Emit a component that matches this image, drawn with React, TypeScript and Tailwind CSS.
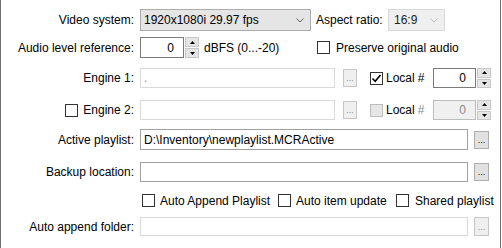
import React from "react";

const font = { fontFamily: '"Liberation Sans", Arial, sans-serif' };

function Chevron({ color }: { color: string }) {
  return (
    <svg width="8" height="5" viewBox="0 0 8 5">
      <path d="M0.5 0.5 L4 4 L7.5 0.5" fill="none" stroke={color} strokeWidth="1" />
    </svg>
  );
}

function Box({ checked = false, disabled = false }: { checked?: boolean; disabled?: boolean }) {
  return (
    <div
      className={
        "w-[13px] h-[13px] shrink-0 border flex items-center justify-center " +
        (disabled ? "border-[#bcbcbc] bg-[#e6e6e6]" : "border-[#333333] bg-white")
      }
    >
      {checked && (
        <svg width="11" height="11" viewBox="0 0 11 11">
          <path d="M1.5 5.5 L4.2 8.3 L9.5 2" fill="none" stroke="#000" strokeWidth="1.6" />
        </svg>
      )}
    </div>
  );
}

function Spin({ disabled = false, w }: { disabled?: boolean; w: string }) {
  return (
    <div className={"flex h-full " + w}>
      <div
        className={
          "flex-1 border flex items-center justify-end pr-[9px] text-[12px] " +
          (disabled ? "border-[#bcbcbc] bg-[#f0f0f0] text-[#8a8a8a]" : "border-[#7a7a7a] bg-white text-black")
        }
      >
        0
      </div>
      <div className="w-[14px] flex flex-col gap-[1px] ml-[1px]">
        <div className="flex-1 bg-[#e5e5e5] border border-[#c8c8c8] flex items-center justify-center">
          <svg width="5" height="3" viewBox="0 0 5 3">
            <path d="M0 3 L2.5 0 L5 3 Z" fill="#000" />
          </svg>
        </div>
        <div className="flex-1 bg-[#e5e5e5] border border-[#c8c8c8] flex items-center justify-center">
          <svg width="5" height="3" viewBox="0 0 5 3">
            <path d="M0 0 L2.5 3 L5 0 Z" fill="#000" />
          </svg>
        </div>
      </div>
    </div>
  );
}

function Btn({ disabled = false, w = "w-[15px]" }: { disabled?: boolean; w?: string }) {
  return (
    <div
      className={
        "h-full border flex items-end justify-center pb-[3px] text-[9px] leading-none " +
        w +
        (disabled ? " border-[#c6c6c6] bg-[#efefef] text-[#8a8a8a]" : " border-[#adadad] bg-[#e1e1e1] text-black")
      }
    >
      ...
    </div>
  );
}

function Label({ children }: { children: React.ReactNode }) {
  return (
    <div className="w-[133px] shrink-0 flex items-center justify-end gap-[5px] text-[12px] text-black whitespace-nowrap">
      {children}
    </div>
  );
}

export default function App() {
  return (
    <div className="w-[502px] h-[248px] bg-white overflow-hidden" style={font}>
      <div className="w-[501px] h-[248px] border-x border-[#6e6e6e] flex flex-col pt-[9px] text-[12px] text-black">
        {/* Row 1 */}
        <div className="flex items-center h-[22px]">
          <Label>Video system:</Label>
          <div className="ml-[6px] w-[171px] h-full bg-[#e5e5e5] border border-[#acacac] flex items-center justify-between pl-[3px] pr-[6px]">
            <span>1920x1080i 29.97 fps</span>
            <Chevron color="#606060" />
          </div>
          <span className="ml-[5px] w-[72px] whitespace-nowrap">Aspect ratio:</span>
          <div className="w-[57px] h-full bg-[#efefef] border border-[#d9d9d9] flex items-center justify-between pl-[5px] pr-[6px]">
            <span className="text-[#222]">16:9</span>
            <Chevron color="#bcbcbc" />
          </div>
        </div>
        {/* Row 2 */}
        <div className="flex items-center h-[21px] mt-[6px]">
          <Label>Audio level reference:</Label>
          <div className="ml-[6px] h-full flex">
            <Spin w="w-[59px]" />
          </div>
          <span className="ml-[5px] w-[113px] whitespace-nowrap">dBFS (0...-20)</span>
          <Box />
          <span className="ml-[6px] whitespace-nowrap">Preserve original audio</span>
        </div>
        {/* Row 3 */}
        <div className="flex items-center h-[20px] mt-[10px]">
          <Label>Engine 1:</Label>
          <div className="ml-[6px] w-[195px] h-full border border-[#d9d9d9] flex items-center pl-[3px] text-[#8a8a8a]">.</div>
          <div className="ml-[8px] h-[18px]">
            <Btn disabled w="w-[14px]" />
          </div>
          <div className="ml-[13px] w-[121px] h-full flex items-center">
            <Box checked />
            <span className="ml-[3px]">Local</span>
            <span className="ml-[3px]">#</span>
            <div className="ml-auto h-full">
              <Spin w="w-[58px]" />
            </div>
          </div>
        </div>
        {/* Row 4 */}
        <div className="flex items-center h-[20px] mt-[12px]">
          <Label>
            <Box />
            <span>Engine 2:</span>
          </Label>
          <div className="ml-[6px] w-[195px] h-full border border-[#d9d9d9]"></div>
          <div className="ml-[8px] h-[18px]">
            <Btn disabled w="w-[14px]" />
          </div>
          <div className="ml-[13px] w-[121px] h-full flex items-center">
            <Box disabled />
            <span className="ml-[3px]">Local</span>
            <span className="ml-[3px] text-[#8a8a8a]">#</span>
            <div className="ml-auto h-full">
              <Spin disabled w="w-[58px]" />
            </div>
          </div>
        </div>
        {/* Row 5 */}
        <div className="flex items-center h-[21px] mt-[9px]">
          <Label>Active playlist:</Label>
          <div className="ml-[6px] w-[328px] h-full border border-[#a0a0a0] flex items-center pl-[3px] whitespace-nowrap">
            D:\Inventory\newplaylist.MCRActive
          </div>
          <div className="ml-[6px] h-[18px]">
            <Btn />
          </div>
        </div>
        {/* Row 6 */}
        <div className="flex items-center h-[20px] mt-[12px]">
          <Label>Backup location:</Label>
          <div className="ml-[6px] w-[328px] h-full border border-[#a0a0a0]"></div>
          <div className="ml-[6px] h-[18px]">
            <Btn />
          </div>
        </div>
        {/* Row 7 */}
        <div className="flex items-center h-[15px] mt-[11px]">
          <div className="w-[141px] shrink-0"></div>
          <Box />
          <span className="ml-[5px] w-[118px] whitespace-nowrap">Auto Append Playlist</span>
          <Box />
          <span className="ml-[5px] w-[100px] whitespace-nowrap">Auto item update</span>
          <Box />
          <span className="ml-[6px] whitespace-nowrap">Shared playlist</span>
        </div>
        {/* Row 8 */}
        <div className="flex items-center h-[19px] mt-[9px]">
          <Label>Auto append folder:</Label>
          <div className="ml-[6px] w-[328px] h-full border border-[#d9d9d9]"></div>
          <div className="ml-[6px] h-[19px]">
            <Btn disabled />
          </div>
        </div>
      </div>
    </div>
  );
}
